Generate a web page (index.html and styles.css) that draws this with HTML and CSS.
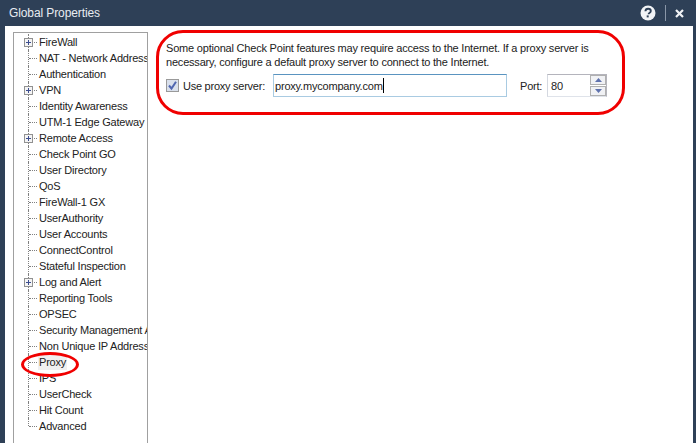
FILE: index.html
```html
<!DOCTYPE html>
<html lang="en">
<head>
<meta charset="utf-8">
<title>Global Properties</title>
<link rel="stylesheet" href="styles.css">
</head>
<body>
<div class="window">
  <header class="titlebar">
    <span class="title">Global Properties</span>
    <div class="controls">
      <svg class="help" width="16" height="16" viewBox="0 0 16 16"><circle cx="8" cy="8" r="7.5" fill="#f1f3f6"/><path d="M5.4 6.2C5.5 4.6 6.6 3.7 8.1 3.7c1.6 0 2.7.9 2.7 2.2 0 1.1-.6 1.6-1.4 2.1-.6.4-.8.7-.8 1.3" fill="none" stroke="#2e4057" stroke-width="1.9"/><rect x="6.7" y="10.4" width="2" height="2" fill="#2e4057"/></svg>
      <span class="sep"></span>
      <svg class="close" width="9" height="9" viewBox="0 0 9 9"><path d="M1 1l7 7M8 1L1 8" stroke="#f1f3f6" stroke-width="2.2" fill="none"/></svg>
    </div>
  </header>
  <div class="content">
    <nav class="tree">
      <ul class="tree-list">
        <li class="node"><span class="plus"></span><span class="label">FireWall</span></li>
        <li class="node"><span class="label">NAT - Network Address Translation</span></li>
        <li class="node"><span class="label">Authentication</span></li>
        <li class="node"><span class="plus"></span><span class="label">VPN</span></li>
        <li class="node"><span class="label">Identity Awareness</span></li>
        <li class="node"><span class="label">UTM-1 Edge Gateway</span></li>
        <li class="node"><span class="plus"></span><span class="label">Remote Access</span></li>
        <li class="node"><span class="label">Check Point GO</span></li>
        <li class="node"><span class="label">User Directory</span></li>
        <li class="node"><span class="label">QoS</span></li>
        <li class="node"><span class="label">FireWall-1 GX</span></li>
        <li class="node"><span class="label">UserAuthority</span></li>
        <li class="node"><span class="label">User Accounts</span></li>
        <li class="node"><span class="label">ConnectControl</span></li>
        <li class="node"><span class="label">Stateful Inspection</span></li>
        <li class="node"><span class="plus"></span><span class="label">Log and Alert</span></li>
        <li class="node"><span class="label">Reporting Tools</span></li>
        <li class="node"><span class="label">OPSEC</span></li>
        <li class="node"><span class="label">Security Management Access</span></li>
        <li class="node"><span class="label">Non Unique IP Address Ranges</span></li>
        <li class="node selected"><span class="label">Proxy</span></li>
        <li class="node"><span class="label">IPS</span></li>
        <li class="node"><span class="label">UserCheck</span></li>
        <li class="node"><span class="label">Hit Count</span></li>
        <li class="node last"><span class="label">Advanced</span></li>
      </ul>
    </nav>
    <main class="pane">
      <p class="intro">Some optional Check Point features may require access to the Internet. If a proxy server is<br>necessary, configure a default proxy server to connect to the Internet.</p>
      <div class="form-row">
        <span class="checkbox"><svg width="11" height="11" viewBox="0 0 11 11"><path d="M2 5.5l2.5 3L9 1.8" fill="none" stroke="#4f66b0" stroke-width="2"/></svg></span>
        <span class="check-label">Use proxy server:</span>
        <div class="text-input"><span class="value">proxy.mycompany.com</span><span class="caret"></span></div>
        <span class="port-label">Port:</span>
        <div class="spin">
          <span class="spin-value">80</span>
          <div class="spin-buttons">
            <span class="spin-btn"><svg width="7" height="4" viewBox="0 0 7 4"><path d="M3.5 0L7 4H0z" fill="#5f72ad"/></svg></span>
            <span class="spin-btn"><svg width="7" height="4" viewBox="0 0 7 4"><path d="M0 0h7L3.5 4z" fill="#5f72ad"/></svg></span>
          </div>
        </div>
      </div>
    </main>
  </div>
  <div class="mark mark-pane"></div>
  <div class="mark mark-proxy"></div>
</div>
</body>
</html>
```

FILE: styles.css
```css
* { box-sizing: border-box; }
html, body { margin: 0; padding: 0; height: 100%; overflow: hidden; }
body { font-family: "Liberation Sans", Arial, sans-serif; font-size: 11px; letter-spacing: -0.2px; color: #222; background: #fff; }
.window { position: relative; width: 696px; height: 443px; display: flex; flex-direction: column; background: #fff; border-left: 5px solid #2e4057; border-right: 3px solid #2e4057; overflow: hidden; }
.titlebar { flex: none; height: 26px; margin-left: -5px; margin-right: -3px; background: #2e4057; display: flex; align-items: center; justify-content: space-between; padding: 0 12px 0 9px; }
.title { color: #e8ecf1; font-size: 12px; letter-spacing: -0.1px; }
.controls { display: flex; align-items: center; }
.help { display: block; }
.sep { width: 1px; height: 16px; background: #8a97a8; margin: 0 9px 0 9px; }
.close { display: block; }
.content { flex: 1; min-height: 0; display: flex; padding: 6px 0 0 8px; }
.tree { flex: none; width: 135px; height: 420px; border: 1px solid #a0a0a0; overflow: hidden; }
.tree-list { list-style: none; margin: 0; padding: 1px 0 0 14px; position: relative; }
.node { position: relative; height: 16px; display: flex; align-items: center; padding-left: 10px; white-space: nowrap; }
.node::before { content: ""; position: absolute; left: 0; top: 0; bottom: 0; border-left: 1px dotted #808080; }
.node::after { content: ""; position: absolute; left: 1px; top: 8px; width: 8px; border-top: 1px dotted #808080; }
.node.last::before { bottom: 8px; }
.plus { position: absolute; z-index: 1; left: -4px; top: 4px; width: 9px; height: 9px; border: 1px solid #919191; background: linear-gradient(#3c4d8f,#3c4d8f) center/5px 1px no-repeat, linear-gradient(#3c4d8f,#3c4d8f) center/1px 5px no-repeat, #f4f4f4; }
.label { padding: 0 1px; height: 15px; line-height: 15px; }
.selected .label { background: #f0f0f0; }
.pane { flex: 1; min-width: 0; padding: 9px 0 0 18px; }
.intro { margin: 0; line-height: 14px; }
.form-row { display: flex; align-items: center; height: 23px; margin-top: 5px; white-space: nowrap; }
.checkbox { flex: none; width: 13px; height: 13px; border: 1px solid #9a9a9a; background: #d9e0ec; display: flex; align-items: center; justify-content: center; }
.check-label { margin-left: 4px; width: 90px; flex: none; letter-spacing: -0.25px; }
.text-input { flex: none; width: 234px; height: 23px; border: 1px solid #a9cbe2; border-top-color: #5a94c0; display: flex; align-items: center; padding-left: 1px; }
.caret { width: 1px; height: 15px; background: #000; }
.port-label { margin-left: 13px; width: 27px; flex: none; }
.spin { flex: none; width: 60px; height: 23px; border: 1px solid #b4b4bc; border-left-color: #d4d8e0; border-bottom-color: #dfe3ea; display: flex; align-items: center; justify-content: space-between; padding-left: 3px; }
.spin-buttons { display: flex; flex-direction: column; gap: 1px; }
.spin-btn { width: 16px; height: 10px; border: 1px solid #b0b0b0; background: #f0f1f4; display: flex; align-items: center; justify-content: center; }
.mark { position: absolute; border: 3px solid #f00000; pointer-events: none; }
.mark-pane { left: 151px; top: 30px; width: 469px; height: 85px; border-radius: 27px; }
.mark-proxy { left: 16px; top: 352px; width: 58px; height: 25px; border-radius: 50%; }
```
